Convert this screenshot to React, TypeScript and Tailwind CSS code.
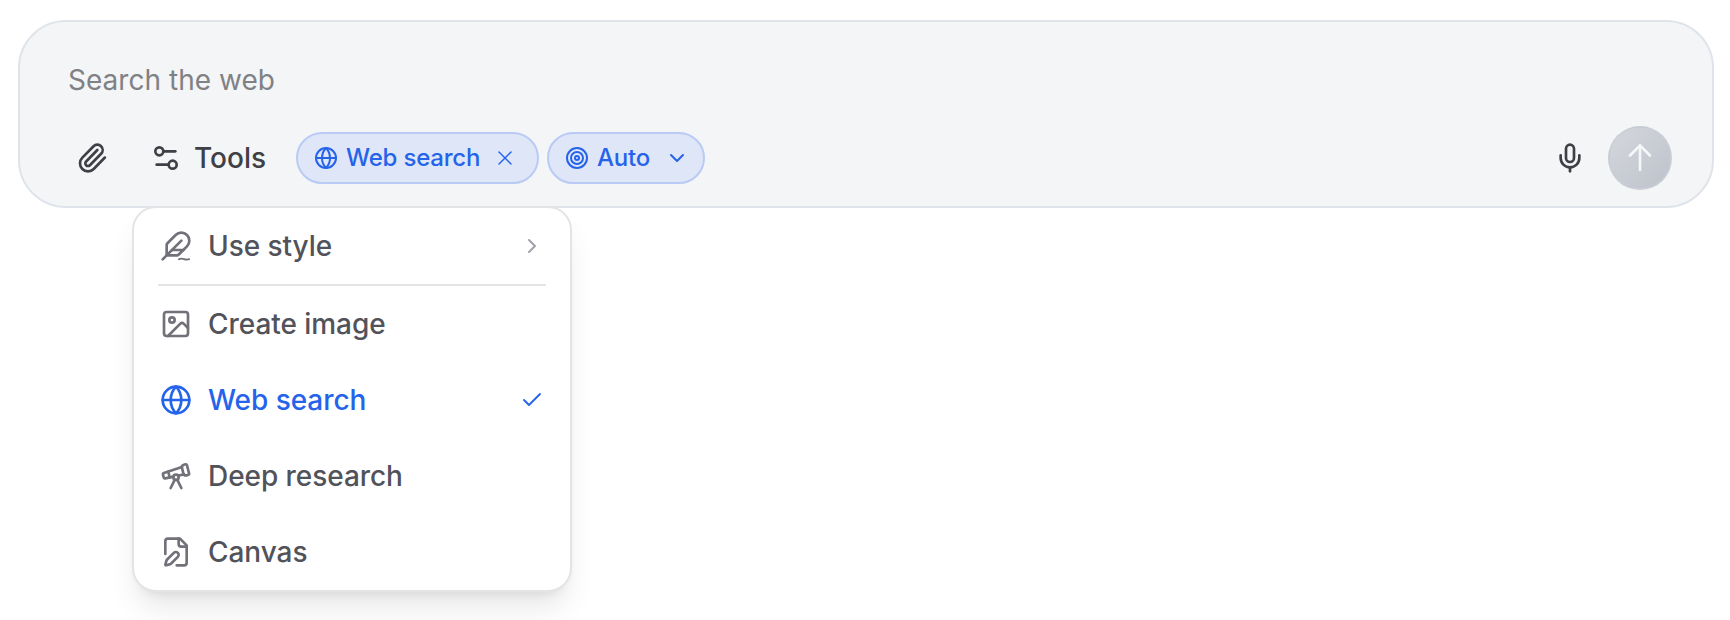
import React from 'react'
import { Check, ChevronDown, ChevronRight, Globe, Image, Mic, Paperclip, Settings2, Target, Telescope, X } from 'lucide-react'

type IconProps = { className?: string }

const QuillIcon = ({ className }: IconProps) => (
    <svg viewBox="0 0 24 24" fill="none" stroke="currentColor" strokeWidth={2} strokeLinecap="round" strokeLinejoin="round" className={className}>
        <path d="M12.67 19a2 2 0 0 0 1.416-.588l6.154-6.172a6 6 0 0 0-8.49-8.49L5.586 9.914A2 2 0 0 0 5 11.328V18a1 1 0 0 0 1 1z" />
        <path d="M16 8 2 22" />
        <path d="M17.5 15H9" />
        <path d="M14.2 22c1.4-.9 2.5-.7 3.8-.2s2.4.6 3.9.1" strokeWidth={1.4} />
    </svg>
)

const CanvasIcon = ({ className }: IconProps) => (
    <svg viewBox="0 0 24 24" fill="none" stroke="currentColor" strokeWidth={2} strokeLinecap="round" strokeLinejoin="round" className={className}>
        <path d="M12.5 22H18a2 2 0 0 0 2-2V7l-5-5H6a2 2 0 0 0-2 2v9.5" />
        <path d="M14 2v4a2 2 0 0 0 2 2h4" />
        <path d="M13.378 15.626a1 1 0 1 0-3.004-3.004l-5.01 5.012a2 2 0 0 0-.506.854l-.837 2.87a.5.5 0 0 0 .62.62l2.87-.837a2 2 0 0 0 .854-.506z" />
    </svg>
)

const SendIcon = ({ className }: IconProps) => (
    <svg viewBox="0 0 32 32" fill="none" stroke="currentColor" strokeWidth={2.6} strokeLinecap="round" strokeLinejoin="round" className={className}>
        <path d="M16 28V3.5" />
        <path d="M6 13.5l10-10 10 10" />
    </svg>
)

interface MenuItemProps {
    icon: React.ReactNode;
    label: string;
    active?: boolean;
    trailing?: React.ReactNode;
}

const MenuItem = ({ icon, label, active = false, trailing }: MenuItemProps) => (
    <button className={`flex h-[76px] w-full items-center px-[26px] text-[28px] font-medium tracking-[-0.002em] ${active ? 'text-[#2563eb]' : 'text-[#52525b]'}`}>
        <span className={active ? 'text-[#2563eb]' : 'text-[#71717a]'}>{icon}</span>
        <span className="ml-4">{label}</span>
        <span className="ml-auto">{trailing}</span>
    </button>
)

const ToolsMenu = () => (
    <div className="absolute left-[112px] top-[184px] w-[440px] rounded-[24px] border-2 border-[#e4e4e7] bg-white shadow-[0_20px_30px_-6px_rgba(0,0,0,0.1),0_8px_12px_-8px_rgba(0,0,0,0.1)]">
        <MenuItem
            icon={<QuillIcon className="size-8" />}
            label="Use style"
            trailing={<ChevronRight className="size-6 text-[#a1a1aa]" strokeWidth={2} />}
        />
        <div className="mx-6 h-0.5 bg-[#e4e4e7]" />
        <MenuItem icon={<Image className="size-8" />} label="Create image" />
        <MenuItem
            icon={<Globe className="size-8" />}
            label="Web search"
            active
            trailing={<Check className="size-6" strokeWidth={1.9} />}
        />
        <MenuItem icon={<Telescope className="size-8" />} label="Deep research" />
        <MenuItem icon={<CanvasIcon className="size-8" />} label="Canvas" />
    </div>
)

interface ChipProps {
    icon: React.ReactNode;
    label: string;
    action: React.ReactNode;
    className?: string;
}

const Chip = ({ icon, label, action, className = '' }: ChipProps) => (
    <button className={`flex h-[52px] items-center rounded-full border-2 border-[#b9cbf5] bg-[#dfe6f7] pl-4 text-2xl font-medium tracking-[-0.008em] text-[#2563eb] ${className}`}>
        {icon}
        <span className="ml-2">{label}</span>
        {action}
    </button>
)

export default function App() {
    return (
        <div className="h-[620px] w-full overflow-hidden bg-white px-[18px] pt-5 font-['Inter',sans-serif]">
            <div className="relative h-[188px] w-[1696px] rounded-[48px] border-2 border-[#dfe4ea] bg-[#f3f5f7]">
                <p className="pl-12 pt-[38px] text-[28px] leading-[40px] tracking-[0.001em] text-[#808184]">Search the web</p>

                {/* Toolbar */}
                <div className="mt-[26px] flex h-16 items-center pl-14 pr-10 text-[#3f3f46]">
                    <Paperclip className="size-8" />
                    <button className="ml-[42px] flex w-[116px] items-center text-[28px] font-medium">
                        <Settings2 className="size-8 shrink-0" />
                        <span className="ml-3">Tools</span>
                    </button>
                    <div className="ml-[30px] flex gap-2">
                        <Chip
                            icon={<Globe className="size-6" />}
                            label="Web search"
                            action={<X className="ml-[13px] size-6" strokeWidth={1.5} />}
                            className="w-[243px]"
                        />
                        <Chip
                            icon={<Target className="size-6" />}
                            label="Auto"
                            action={<ChevronDown className="ml-[15px] size-6" strokeWidth={2} />}
                            className="w-[158px]"
                        />
                    </div>
                    <Mic className="ml-auto size-8" />
                    <button className="ml-[22px] flex size-16 items-center justify-center rounded-full border-2 border-[#c9cdd5]/60 bg-gradient-to-br from-[#d4d7dc] to-[#bec2cb] text-[#f6f7f9]">
                        <SendIcon className="size-8" />
                    </button>
                </div>

                <ToolsMenu />
            </div>
        </div>
    )
}
